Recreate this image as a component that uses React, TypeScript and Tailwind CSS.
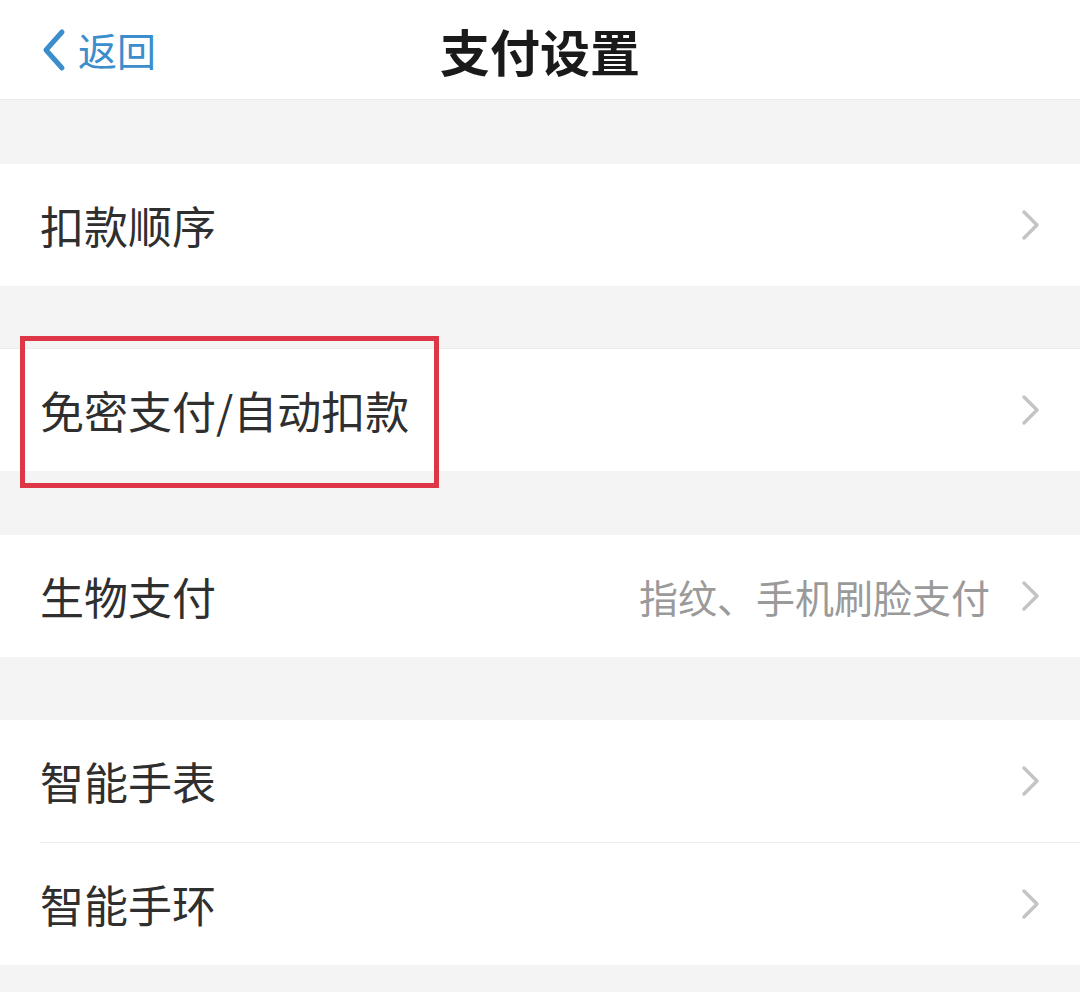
import { ReactNode } from "react";

const font = { fontFamily: '"Noto Sans CJK SC", "Noto Sans", sans-serif' };

function Chevron() {
    return (
        <svg width="22" height="34" viewBox="0 0 22 34" className="shrink-0">
            <path d="M4 4 L17 17 L4 30" fill="none" stroke="#c4c4c8" strokeWidth="3.5" strokeLinecap="round" strokeLinejoin="round" />
        </svg>
    );
}

interface RowProps {
    label: string;
    detail?: string;
    children?: ReactNode;
}

function Row({ label, detail, children }: RowProps) {
    return (
        <div className="relative flex h-[122px] items-center bg-white pl-[40px] pr-[38px]">
            <span className="flex-1 text-[44px] leading-none text-[#2f2f2f]">{label}</span>
            {detail && <span className="mr-[30px] text-[39px] leading-none text-[#9a9a9a]">{detail}</span>}
            <Chevron />
            {children}
        </div>
    );
}

export default function App() {
    return (
        <div className="flex h-[992px] w-[1080px] flex-col bg-[#f4f4f4]" style={font}>
            <div className="relative flex h-[100px] items-center justify-center border-b border-[#ececec] bg-white">
                <div className="absolute left-[40px] top-0 flex h-full items-center gap-[10px] text-[#3b8dcc]">
                    <svg width="28" height="44" viewBox="0 0 28 44">
                        <path d="M22 4 L6 22 L22 40" fill="none" stroke="#3b8dcc" strokeWidth="5" strokeLinecap="round" strokeLinejoin="round" />
                    </svg>
                    <span className="text-[39px] leading-none">返回</span>
                </div>
                <span className="text-[50px] font-bold leading-none text-[#1a1a1a]">支付设置</span>
            </div>

            <div className="h-[64px]" />
            <Row label="扣款顺序" />

            <div className="h-[63px] border-b border-[#ebebeb]" />
            <Row label="免密支付/自动扣款">
                <div className="absolute left-[20px] top-[-13px] h-[152px] w-[419px] border-[5px] border-[#dd3646]" />
            </Row>

            <div className="h-[64px]" />
            <Row label="生物支付" detail="指纹、手机刷脸支付" />

            <div className="h-[63px]" />
            <div className="flex flex-col bg-white">
                <Row label="智能手表" />
                <div className="ml-[40px] h-px bg-[#ececec]" />
                <Row label="智能手环" />
            </div>
            <div className="flex-1" />
        </div>
    );
}
